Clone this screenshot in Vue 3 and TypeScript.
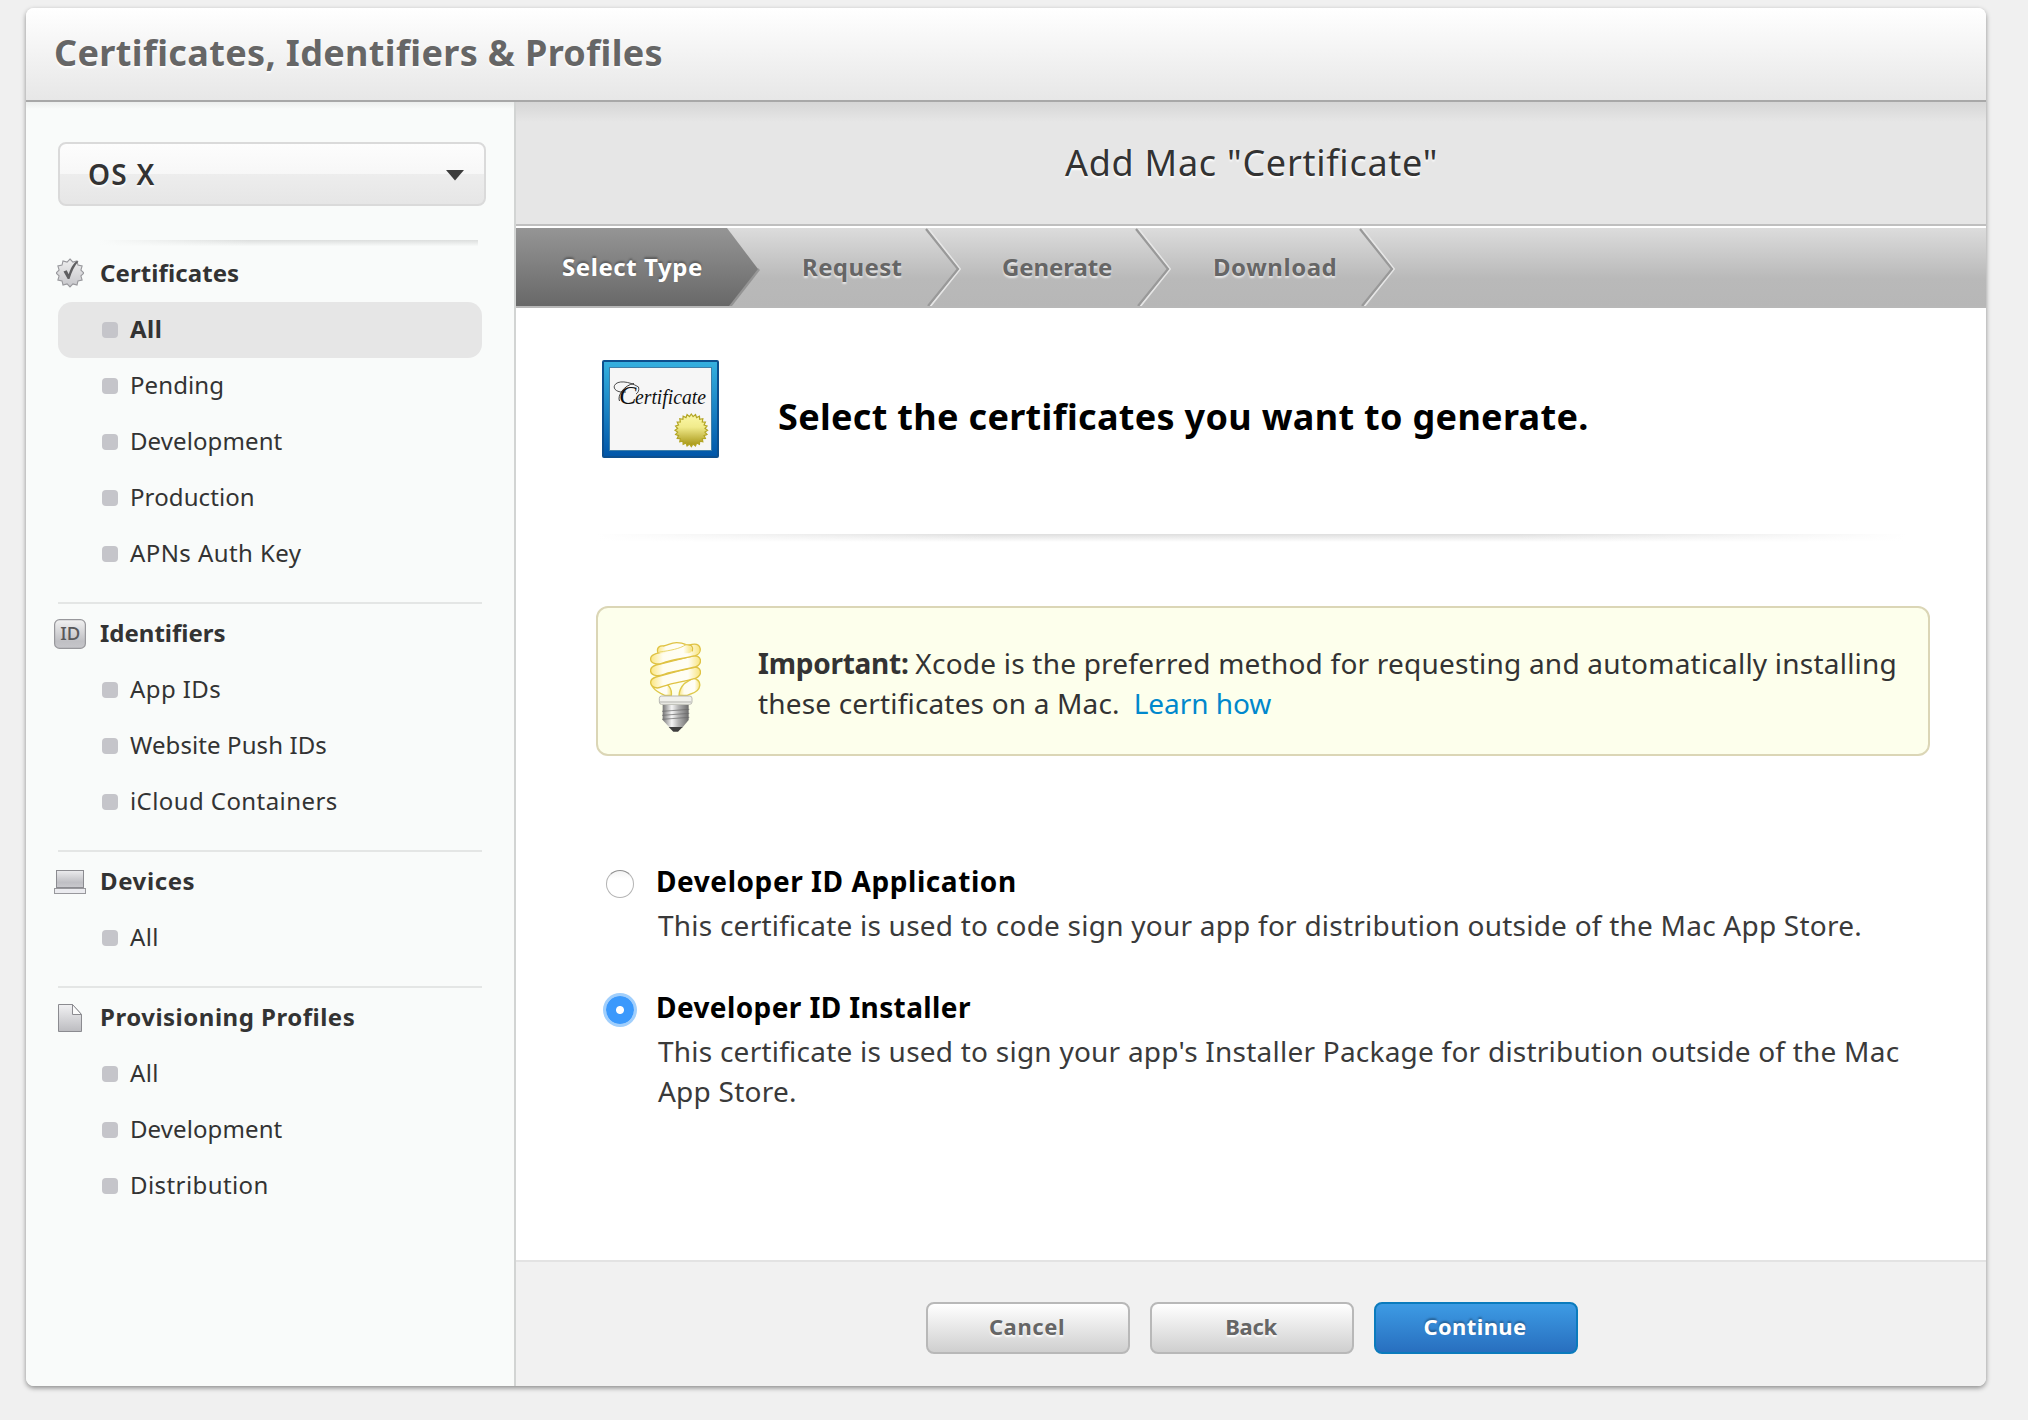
<script setup lang="ts">
interface Item { label: string; active?: boolean; tight?: boolean }
interface Section { title: string; icon: 'seal' | 'id' | 'laptop' | 'doc'; spacing: string; items: Item[] }
interface Step { label: string; active?: boolean; key: string }

const sections: Section[] = [
  {
    title: 'Certificates', icon: 'seal', spacing: 'ls-14',
    items: [{ label: 'All', active: true }, { label: 'Pending', tight: true }, { label: 'Development', tight: true }, { label: 'Production', tight: true }, { label: 'APNs Auth Key' }],
  },
  {
    title: 'Identifiers', icon: 'id', spacing: 'ls-0',
    items: [{ label: 'App IDs' }, { label: 'Website Push IDs', tight: true }, { label: 'iCloud Containers' }],
  },
  { title: 'Devices', icon: 'laptop', spacing: 'ls-60', items: [{ label: 'All' }] },
  {
    title: 'Provisioning Profiles', icon: 'doc', spacing: 'ls-50',
    items: [{ label: 'All' }, { label: 'Development', tight: true }, { label: 'Distribution' }],
  },
]

const steps: Step[] = [
  { label: 'Select Type', key: 'type', active: true },
  { label: 'Request', key: 'request' },
  { label: 'Generate', key: 'generate' },
  { label: 'Download', key: 'download' },
]

function star(cx: number, cy: number, outer: number, inner: number, points: number): string {
  const out: string[] = []
  for (let i = 0; i < points * 2; i++) {
    const r = i % 2 === 0 ? outer : inner
    const a = (Math.PI * i) / points - Math.PI / 2
    out.push(`${(cx + r * Math.cos(a)).toFixed(2)},${(cy + r * Math.sin(a)).toFixed(2)}`)
  }
  return out.join(' ')
}
const smallSeal = star(14, 15, 14, 11.3, 12)
const goldSeal = star(89.3, 70.3, 16.3, 13.8, 24)
</script>

<template>
  <div class="page">
    <div class="panel">
      <header class="topbar"><h1>Certificates, Identifiers &amp; Profiles</h1></header>
      <div class="body">
        <aside class="sidebar">
          <div class="select">
            <span>OS X</span>
            <svg width="18" height="11" viewBox="0 0 18 11"><path d="M0 0h18l-9 10.5z" fill="#3c3c3c" /></svg>
          </div>
          <div class="fade-rule"></div>
          <section v-for="s in sections" :key="s.title" class="section">
            <h2 :class="s.spacing">
              <span class="icon">
                <svg v-if="s.icon === 'seal'" class="i-seal" width="28" height="30" viewBox="0 0 28 30">
                  <defs><linearGradient id="gs" x1="0" y1="0" x2="0" y2="1"><stop offset="0" stop-color="#efefef" /><stop offset="1" stop-color="#c6c6ca" /></linearGradient></defs>
                  <polygon :points="smallSeal" fill="url(#gs)" stroke="#98989c" stroke-width="1.1" />
                  <path d="M7.5 13.5l3.2-1.2 2 4C14.500 10.500 17 5.500 20.500 3.200h2C18.500 8 15.500 14 13.500 21h-1.800z" fill="#5f5f61" />
                </svg>
                <svg v-else-if="s.icon === 'id'" class="i-id" width="32" height="30" viewBox="0 0 32 30">
                  <defs><linearGradient id="gi" x1="0" y1="0" x2="0" y2="1"><stop offset="0" stop-color="#f2f2f2" /><stop offset=".75" stop-color="#c0c0c4" /><stop offset="1" stop-color="#c6c6ca" /></linearGradient></defs>
                  <rect x=".6" y=".6" width="30.800" height="28.800" rx="5" fill="url(#gi)" stroke="#98989c" stroke-width="1.200" />
                  <text x="16.300" y="21.200" text-anchor="middle" font-size="18.500" font-weight="500" fill="#58585a">ID</text>
                </svg>
                <svg v-else-if="s.icon === 'laptop'" class="i-laptop" width="32" height="24" viewBox="0 0 32 24">
                  <defs><linearGradient id="gl" x1="0" y1="0" x2="0" y2="1"><stop offset="0" stop-color="#ececee" /><stop offset=".7" stop-color="#bfbfc4" /><stop offset="1" stop-color="#c9c9cd" /></linearGradient></defs>
                  <rect x="2.500" y=".5" width="27" height="17" fill="url(#gl)" stroke="#8b8b90" />
                  <rect x=".5" y="18.500" width="31" height="5" fill="#ebebef" stroke="#98989c" />
                </svg>
                <svg v-else class="i-doc" width="24" height="28" viewBox="0 0 24 28">
                  <defs><linearGradient id="gd" x1="0" y1="0" x2="0" y2="1"><stop offset="0" stop-color="#f1f1f3" /><stop offset="1" stop-color="#bcbcc0" /></linearGradient></defs>
                  <path d="M.5.5h14l9 10v17H.5z" fill="url(#gd)" stroke="#8b8b90" />
                  <path d="M14.500.5v10h9z" fill="#fbfbfb" stroke="#8b8b90" />
                </svg>
              </span>
              <span class="label">{{ s.title }}</span>
            </h2>
            <ul>
              <li v-for="it in s.items" :key="it.label" :class="{ active: it.active, tight: it.tight }"><i></i><span>{{ it.label }}</span></li>
            </ul>
          </section>
        </aside>

        <main class="main">
          <div class="title"><h2>Add Mac "Certificate"</h2></div>
          <nav class="steps">
            <div v-for="st in steps" :key="st.key" class="step" :class="[st.key, { current: st.active }]">
              <span>{{ st.label }}</span>
              <svg v-if="st.active" width="33" height="78" viewBox="0 0 33 78">
                <defs>
                  <linearGradient id="ga" x1="0" y1="0" x2="0" y2="1"><stop offset="0" stop-color="#959595" /><stop offset="1" stop-color="#686868" /></linearGradient>
                </defs>
                <path d="M5 78L33 42 31 40 0 78z" fill="#000" opacity=".2" />
                <path d="M0 0L31 41 2 78H0z" fill="url(#ga)" />
              </svg>
              <svg v-else width="36" height="78" viewBox="0 0 36 78">
                <path d="M3.500 1L35 41 5.500 78" fill="none" stroke="#e6e6e6" stroke-width="2" />
                <path d="M1 1L33 41 3 78" fill="none" stroke="#999" stroke-width="2.200" />
              </svg>
            </div>
          </nav>

          <div class="content">
            <div class="intro">
              <svg width="117" height="98" viewBox="0 0 117 98">
                <defs>
                  <linearGradient id="gf" x1="0" y1="0" x2="0" y2="1"><stop offset="0" stop-color="#36b0df" /><stop offset=".12" stop-color="#2ea6d9" /><stop offset="1" stop-color="#0055a8" /></linearGradient>
                  <linearGradient id="gg" x1="0" y1="0" x2="0" y2="1"><stop offset="0" stop-color="#fbf8a8" /><stop offset=".4" stop-color="#f1eb8c" /><stop offset="1" stop-color="#a3910f" /></linearGradient>
                </defs>
                <rect x="1" y="1" width="115" height="96" rx="1" fill="url(#gf)" stroke="#0c4f8e" stroke-width="2" />
                <rect x="7.500" y="7.500" width="102" height="83" fill="#f6f6f6" stroke="#3f7fa8" stroke-width="1" />
                <path d="M24 32C15 33 11 29 12.500 25.500C15 20 27 21 36.500 27C37.500 30 36 33 34 34" fill="none" stroke="#222" stroke-width=".8" />
                <path d="M32 23.500C22 25 15 36 17.500 41" fill="none" stroke="#222" stroke-width=".9" />
                <text class="script" x="17" y="44.300" font-size="26">C</text>
                <text class="script" x="33" y="44.300" font-size="21" textLength="71" lengthAdjust="spacingAndGlyphs">ertificate</text>
                <polygon :points="goldSeal" fill="url(#gg)" stroke="#b3a524" stroke-width="1.200" />
              </svg>
              <h3>Select the certificates you want to generate.</h3>
            </div>
            <div class="content-rule"></div>

            <div class="note">
              <svg class="bulb" width="51" height="90" viewBox="0 0 153 270">
                <defs>
                  <linearGradient id="gb" x1="0" y1="0" x2="1" y2="0"><stop offset="0" stop-color="#fbe680" /><stop offset=".25" stop-color="#fffdf0" /><stop offset=".75" stop-color="#fffef6" /><stop offset="1" stop-color="#f8e47c" /></linearGradient>
                  <linearGradient id="gm" x1="0" y1="0" x2="1" y2="0"><stop offset="0" stop-color="#777" /><stop offset=".35" stop-color="#f4f4f4" /><stop offset=".6" stop-color="#b5b5b5" /><stop offset="1" stop-color="#6d6d6d" /></linearGradient>
                </defs>
                <path d="M18 108C-6 122 6 140 32 154L44 160H64C66 144 60 134 50 126z" fill="url(#gb)" stroke="#dfc94a" stroke-width="4" />
                <path d="M130 108C158 116 156 146 122 156L112 160H87C88 146 92 136 104 124z" fill="url(#gb)" stroke="#dfc94a" stroke-width="4" />
                <g fill="url(#gb)" stroke="#dfc243" stroke-width="4" stroke-linejoin="round">
                  <path d="M18 105L126 76C158 70 158 103 136 109C110 117 82 121 58 127C40 132 30 138 22 138C-4 134-4 112 18 105z" />
                  <path d="M18 69L126 42C158 36 158 69 136 75C110 82 80 86 54 93C38 98 30 102 20 101C-4 98-4 76 18 69z" />
                  <path d="M18 35L126 7C156 2 158 34 136 41C110 48 80 51 54 58C38 62 30 67 20 66C-4 62-4 42 18 35z" />
                  <path d="M28 12C48 8 56 2 82 2C96 2 106 4 116 10C130 20 128 32 116 34L34 34C18 30 20 16 28 12z" stroke="none" />
                  <path d="M24 33C18 16 30 11 40 12C56 10 60 2 80 2C92 2 100 4 108 8C126 8 130 14 127 28" fill="none" />
                  <path d="M28 30C60 26 90 20 108 8" fill="none" stroke="#ead66b" stroke-width="3" />
                </g>
                <rect x="28" y="162" width="98" height="25" rx="7" fill="#f1f1ec" stroke="#b9b9b2" stroke-width="3" />
                <path d="M30 180H124" stroke="#c9c9c4" stroke-width="5" />
                <path d="M38 189H116V234L96 258H60L38 234z" fill="url(#gm)" />
                <path d="M36 208L118 202M36 220L118 214M36 232L118 226" stroke="#6b6b6b" stroke-width="3" opacity=".7" />
                <path d="M56 255H98L84 269H70z" fill="#3f3f3f" />
              </svg>
              <p><b>Important:</b> <span class="n1">Xcode is the preferred method for requesting and automatically installing</span><br /><span class="n2">these certificates on a Mac.</span><a>Learn how</a></p>
            </div>

            <div class="option">
              <span class="radio"></span>
              <div>
                <h4 class="app">Developer ID Application</h4>
                <p>This certificate is used to code sign your app for distribution outside of the Mac App Store.</p>
              </div>
            </div>
            <div class="option">
              <span class="radio on"></span>
              <div>
                <h4>Developer ID Installer</h4>
                <p>This certificate is used to sign your app's Installer Package for distribution outside of the Mac<br />App Store.</p>
              </div>
            </div>
          </div>

          <footer class="actions">
            <button class="cancel">Cancel</button>
            <button class="back">Back</button>
            <button class="primary">Continue</button>
          </footer>
        </main>
      </div>
    </div>
  </div>
</template>

<style>
body { background: #f0f0f0; }
</style>
<style scoped>
* { box-sizing: border-box; margin: 0; padding: 0; }
.page { width: 2028px; height: 1420px; padding: 8px 42px 34px 26px; background: #f0f0f0; font-family: "Noto Sans", "Open Sans", sans-serif; color: #333; white-space: nowrap; overflow: hidden; }
.panel { height: 1378px; border-radius: 8px; background: #fff; box-shadow: 0 2px 5px rgba(0, 0, 0, .42); overflow: hidden; display: flex; flex-direction: column; }
.topbar { height: 94px; border-bottom: 2px solid #a8a8a8; background: linear-gradient(#fff, #e7e7e7); padding-left: 28px; flex: none; }
.topbar h1 { font-size: 36px; line-height: 90px; font-weight: 700; letter-spacing: .36px; color: #666; text-shadow: 0 2px 2px #fff; }
.body { flex: 1; display: flex; min-height: 0; }
.sidebar { width: 490px; border-right: 2px solid #d2d4d3; background: linear-gradient(#eceeed, #f9fbfa 7px); padding: 40px 0 0 32px; }
.select { width: 428px; height: 64px; border: 2px solid #dadada; border-radius: 8px; background: linear-gradient(#fdfdfd, #f7f7f7 50%, #ededed 50%, #e6e6e6); display: flex; justify-content: space-between; align-items: center; padding: 0 20px 0 28px; font-size: 28px; font-weight: 600; letter-spacing: 1.26px; text-shadow: 0 2px 2px #fff; }
.select span { padding-bottom: 1px; }
.select svg { margin-top: 2px; }
.fade-rule { width: 380px; height: 6px; margin: 34px 0 -2px 40px; background: linear-gradient(90deg, #f9fbfa, rgba(249, 251, 250, 0) 40%), linear-gradient(#dcdedd, #f7f9f8); }
.section { width: 424px; }
.section + .section { margin-top: 20px; border-top: 2px solid #e4e6e5; }
.section h2 { height: 58px; margin-left: -4px; display: flex; align-items: center; font-size: 24px; font-weight: 700; }
.label { padding-bottom: 2px; }
.ls-0 { letter-spacing: 0; }
.ls-14 { letter-spacing: .1px; }
.ls-50 { letter-spacing: .5px; }
.ls-60 { letter-spacing: .6px; }
.icon { width: 46px; display: flex; }
.i-seal { margin-left: 2px; }
.i-id { margin-top: 2px; letter-spacing: 0; }
.i-laptop { margin-top: 2px; }
.i-doc { margin: 2px 0 0 4px; }
ul { list-style: none; }
li { height: 56px; border-radius: 14px; display: flex; align-items: center; gap: 12px; padding-left: 44px; font-size: 24px; letter-spacing: .42px; }
li span { padding-bottom: 4px; }
li i { width: 16px; height: 16px; border-radius: 4px; background: #c5c5ca; }
li.tight { letter-spacing: .1px; }
li.active { background: #e6e6e6; font-weight: 700; letter-spacing: .5px; }
.main { flex: 1; display: flex; flex-direction: column; }
.title { height: 124px; background: linear-gradient(#d6d6d6, #e6e6e6 20px); border-bottom: 2px solid #bfbfbf; padding-left: 549px; }
.title h2 { font-size: 36px; line-height: 122px; font-weight: 400; letter-spacing: .73px; text-shadow: 0 2px 2px #fff; }
.steps { height: 82px; border-top: 2px solid #fff; border-bottom: 2px solid #b8b8b8; background: linear-gradient(#dcdcdc, #b9b9b9 65%, #b7b7b7); display: flex; }
.step { display: flex; justify-content: space-between; align-items: center; font-size: 24px; font-weight: 700; color: #666; text-shadow: 0 2px 2px rgba(255, 255, 255, .7); letter-spacing: .4px; }
.step span { padding-bottom: 2px; }
.step svg { flex: none; }
.step.type { width: 244px; color: #fff; letter-spacing: .57px; text-shadow: 0 -2px 2px rgba(0, 0, 0, .3); }
.step.type span { flex: 1; line-height: 78px; padding: 0 0 0 46px; background: linear-gradient(#959595, #686868); }
.step.request { width: 201px; padding-left: 42px; }
.step.generate { width: 210px; padding-left: 41px; letter-spacing: -.1px; }
.step.download { width: 224px; padding-left: 42px; letter-spacing: .55px; }
.content { flex: 1; padding: 52px 56px 0 80px; }
.intro { display: flex; padding-left: 6px; height: 98px; }
.intro h3 { margin: 32px 0 0 59px; font-size: 36px; line-height: 50px; font-weight: 700; letter-spacing: .32px; color: #000; }
.script { font-family: "Liberation Serif", serif; font-style: italic; fill: #111; }
.content-rule { width: 1310px; height: 8px; margin-top: 76px; background: linear-gradient(90deg, #fff, rgba(255, 255, 255, 0) 30%, rgba(255, 255, 255, 0) 70%, #fff), linear-gradient(#dedede, #fff); }
.note { margin-top: 64px; width: 1334px; height: 150px; border: 2px solid #dbd6b6; border-radius: 12px; background: #fdffec; display: flex; padding: 34px 0 0 52px; }
.note p { margin: 1px 0 0 57px; font-size: 28px; line-height: 40px; }
.note b { letter-spacing: -.25px; margin-right: -.500px; }
.n1 { letter-spacing: .22px; }
.n2 { letter-spacing: .17px; }
.note a { color: #08c; margin-left: 14px; letter-spacing: -.05px; }
.option { display: flex; margin: 42px 0 0 10px; }
.note + .option { margin-top: 105px; }
.radio { width: 28px; height: 28px; margin: 9px 22px 0 0; border-radius: 50%; border: 1.500px solid #b4b4b4; border-top-color: #8f8f8f; background: linear-gradient(#f3f3f3, #fff 30%); flex: none; }
.radio.on { border: 0; background: radial-gradient(circle, #fff 3.500px, #3b99fc 4.500px); box-shadow: 0 0 0 3px #a1cffc; }
.option h4 { font-size: 28px; line-height: 40px; font-weight: 700; color: #000; letter-spacing: .4px; }
.option h4.app { letter-spacing: .57px; }
.option p { margin: 4px 0 0 2px; font-size: 28px; line-height: 40px; letter-spacing: .23px; color: #3a3a3a; }
.actions { height: 126px; border-top: 2px solid #e3e3e3; background: #f1f1f1; display: flex; gap: 20px; padding: 40px 0 0 410px; }
.actions button { width: 204px; height: 52px; border: 2px solid #b8b8b8; border-radius: 8px; background: linear-gradient(#fff, #cfcfcf); font: 700 22px/44px "Noto Sans", sans-serif; color: #666; text-shadow: 0 2px 2px #fff; padding: 0 2px 4px 0; }
.actions .cancel { letter-spacing: .6px; }
.actions .back { letter-spacing: -.3px; }
.actions .primary { border-color: #0b7bbd; background: linear-gradient(#3d9be4, #286fbf); color: #fff; letter-spacing: .37px; text-shadow: 0 -2px 2px rgba(0, 0, 0, .3); }
</style>
